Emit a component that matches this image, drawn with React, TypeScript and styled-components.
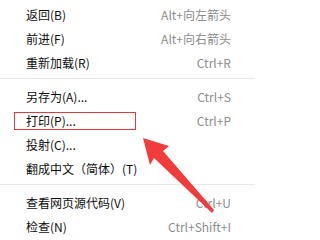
import React from "react";
import styled, { createGlobalStyle } from "styled-components";

const Global = createGlobalStyle`
  html, body { margin: 0; padding: 0; background: #ffffff; }
  body { width: 255px; height: 240px; overflow: hidden; }
`;

const Page = styled.div`
  position: relative;
  width: 255px;
  height: 240px;
  background: #ffffff;
  overflow: hidden;
`;

const Menu = styled.div`
  display: flex;
  flex-direction: column;
  padding-top: 3px;
  font-family: "Microsoft YaHei", "Noto Sans CJK SC", "Noto Sans", sans-serif;
  font-size: 12px;
`;

const Row = styled.div<{ $marked?: boolean }>`
  position: relative;
  display: flex;
  align-items: center;
  justify-content: space-between;
  height: 24px;
  padding: 0 24px 0 26px;
  line-height: 16px;
  ${(p) =>
    p.$marked &&
    `
    &::after {
      content: "";
      position: absolute;
      left: 14px;
      top: 3px;
      width: 120px;
      height: 16px;
      border: 1px solid #e8383d;
    }
  `}
`;

const Label = styled.span`
  color: #0d0d0d;
  white-space: nowrap;
`;

const Shortcut = styled.span`
  color: #8c8c8c;
  white-space: nowrap;
`;

const Separator = styled.div`
  height: 1px;
  margin: 3px 0 6px;
  background: #e8e8e8;
`;

const ArrowLayer = styled.svg`
  position: absolute;
  left: 0;
  top: 0;
  width: 255px;
  height: 240px;
  pointer-events: none;
`;

type Item = { label: string; shortcut?: string; marked?: boolean } | "sep";

const items: Item[] = [
  { label: "返回(B)", shortcut: "Alt+向左箭头" },
  { label: "前进(F)", shortcut: "Alt+向右箭头" },
  { label: "重新加载(R)", shortcut: "Ctrl+R" },
  "sep",
  { label: "另存为(A)...", shortcut: "Ctrl+S" },
  { label: "打印(P)...", shortcut: "Ctrl+P", marked: true },
  { label: "投射(C)..." },
  { label: "翻成中文（简体）(T)" },
  "sep",
  { label: "查看网页源代码(V)", shortcut: "Ctrl+U" },
  { label: "检查(N)", shortcut: "Ctrl+Shift+I" },
];

export default function App() {
  return (
    <Page>
      <Global />
      <Menu>
        {items.map((it, i) =>
          it === "sep" ? (
            <Separator key={i} />
          ) : (
            <Row key={i} $marked={it.marked}>
              <Label>{it.label}</Label>
              {it.shortcut && <Shortcut>{it.shortcut}</Shortcut>}
            </Row>
          )
        )}
      </Menu>
      <ArrowLayer viewBox="0 0 255 240">
        <polygon
          points="143,138 169,146 163,151 214,210 212,213 154,158 150,165"
          fill="#f23b3b"
        />
      </ArrowLayer>
    </Page>
  );
}
